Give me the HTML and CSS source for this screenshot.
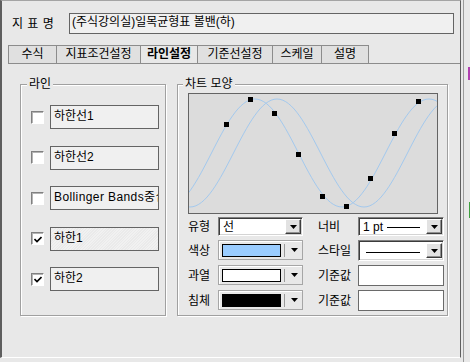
FILE: index.html
```html
<!DOCTYPE html>
<html lang="ko">
<head>
<meta charset="utf-8">
<title>지표 라인설정</title>
<link rel="stylesheet" href="styles.css">
</head>
<body>
<div class="screen">
  <div class="dialog">
    <div class="header">
      <span class="header-label">지 표 명</span>
      <div class="name-box">(주식강의실)일목균형표 볼밴(하)</div>
    </div>
    <div class="tabs">
      <div class="tab t1">수식</div>
      <div class="tab t2">지표조건설정</div>
      <div class="tab t3 active">라인설정</div>
      <div class="tab t4">기준선설정</div>
      <div class="tab t5">스케일</div>
      <div class="tab t6">설명</div>
    </div>
    <div class="panel">
      <div class="group line-group">
        <div class="group-title">라인</div>
        <div class="line-list">
          <div class="line-row"><span class="check"></span><div class="line-name">하한선1</div></div>
          <div class="line-row"><span class="check"></span><div class="line-name">하한선2</div></div>
          <div class="line-row"><span class="check"></span><div class="line-name latin">Bollinger Bands중심선</div></div>
          <div class="line-row"><span class="check checked"><svg width="8" height="7" viewBox="0 0 8 7"><path d="M0.5 3 L3 5.5 L7.5 1" fill="none" stroke="#000" stroke-width="1.6"/></svg></span><div class="line-name hatched">하한1</div></div>
          <div class="line-row"><span class="check checked"><svg width="8" height="7" viewBox="0 0 8 7"><path d="M0.5 3 L3 5.5 L7.5 1" fill="none" stroke="#000" stroke-width="1.6"/></svg></span><div class="line-name">하한2</div></div>
        </div>
      </div>
      <div class="group chart-group">
        <div class="group-title">차트 모양</div>
        <div class="chart">
          <svg width="248" height="119" viewBox="189 94 248 119">
            <path class="curve" d="M168,207 C199.7,207 223.3,99 255,99 C286.7,99 310.3,207 342,207 C373.7,207 397.3,99 429,99 C460.7,99 484.3,207 516,207"/>
            <path class="curve" d="M103,99 C134.7,99 158.3,207 190,207 C221.7,207 245.3,99 277,99 C308.7,99 332.3,207 364,207 C395.7,207 419.3,99 451,99"/>
            <g class="marks">
              <rect x="224" y="122" width="5" height="5"/>
              <rect x="248" y="97" width="5" height="5"/>
              <rect x="272" y="111" width="5" height="5"/>
              <rect x="296" y="152" width="5" height="5"/>
              <rect x="320" y="194" width="5" height="5"/>
              <rect x="344" y="204" width="5" height="5"/>
              <rect x="368" y="176" width="5" height="5"/>
              <rect x="392" y="131" width="5" height="5"/>
              <rect x="416" y="99" width="5" height="5"/>
            </g>
          </svg>
        </div>
        <div class="props">
          <span class="lbl">유형</span>
          <div class="select"><span class="val">선</span><span class="btn"><svg width="7" height="4" viewBox="0 0 7 4"><path d="M0 0H7L3.5 4Z"/></svg></span></div>
          <span class="lbl lbl2">너비</span>
          <div class="select"><span class="val">1 pt</span><span class="pt-line"></span><span class="btn"><svg width="7" height="4" viewBox="0 0 7 4"><path d="M0 0H7L3.5 4Z"/></svg></span></div>

          <span class="lbl">색상</span>
          <div class="combo"><span class="swatch sw-blue"></span><span class="sep"></span><span class="arrow"><svg width="7" height="4" viewBox="0 0 7 4"><path d="M0 0H7L3.5 4Z"/></svg></span></div>
          <span class="lbl lbl2">스타일</span>
          <div class="select tall"><span class="style-line"></span><span class="btn"><svg width="7" height="4" viewBox="0 0 7 4"><path d="M0 0H7L3.5 4Z"/></svg></span></div>

          <span class="lbl">과열</span>
          <div class="combo"><span class="swatch sw-white"></span><span class="sep"></span><span class="arrow"><svg width="7" height="4" viewBox="0 0 7 4"><path d="M0 0H7L3.5 4Z"/></svg></span></div>
          <span class="lbl lbl2">기준값</span>
          <div class="input"></div>

          <span class="lbl">침체</span>
          <div class="combo"><span class="swatch sw-black"></span><span class="sep"></span><span class="arrow"><svg width="7" height="4" viewBox="0 0 7 4"><path d="M0 0H7L3.5 4Z"/></svg></span></div>
          <span class="lbl lbl2">기준값</span>
          <div class="input"></div>
        </div>
      </div>
    </div>
  </div>
  <div class="side">
    <span class="side-line"></span>
    <div class="side-marks">
      <span class="mark-purple"></span>
      <span class="mark-green"></span>
    </div>
  </div>
</div>
</body>
</html>
```

FILE: styles.css
```css
* { box-sizing: border-box; }

html, body {
  margin: 0;
  padding: 0;
}

body {
  width: 470px;
  height: 362px;
  overflow: hidden;
  background: #e8e8e8;
  color: #000;
  font-family: "Liberation Sans", "Noto Sans CJK KR", sans-serif;
  font-size: 12px;
  line-height: 14px;
}

.screen {
  display: flex;
  height: 362px;
}

.dialog {
  width: 461px;
  height: 358px;
  flex: none;
  display: flex;
  flex-direction: column;
  border-top: 1px solid #a4a4a4;
  border-left: 2px solid #5e5e5e;
  border-right: 1px solid #5e5e5e;
  border-bottom: 1px solid #ffffff;
}

/* header */
.header {
  display: flex;
  align-items: center;
  margin-top: 12px;
  padding-left: 10px;
  height: 21px;
}

.header-label {
  width: 57px;
  word-spacing: 1px;
  padding-top: 1px;
}

.name-box {
  width: 385px;
  height: 21px;
  border: 1px solid #646464;
  background: #f0f0f0;
  padding: 1px 2px 0;
  white-space: nowrap;
}

/* tabs */
.tabs {
  display: flex;
  margin-top: 11px;
  margin-left: 6px;
  height: 19px;
  border-bottom: 1px solid #8c8c8c;
}

.tab {
  height: 18px;
  border-top: 1px solid #8c8c8c;
  border-left: 1px solid #8c8c8c;
  background: #e0e0e0;
  text-align: center;
  padding-top: 1px;
  white-space: nowrap;
}

.tab.active {
  background: #e8e8e8;
  font-weight: bold;
}

.t1 { width: 48px; }
.t2 { width: 84px; }
.t3 { width: 57px; }
.t4 { width: 75px; }
.t5 { width: 49px; }
.t6 { width: 48px; border-right: 1px solid #8c8c8c; }

/* panel */
.panel {
  display: flex;
  gap: 11px;
  margin-top: 20px;
  padding-left: 18px;
}

.group {
  height: 232px;
  border: 1px solid #a0a0a0;
  box-shadow: inset 1px 1px #ffffff, 1px 1px #ffffff;
  display: flex;
  flex-direction: column;
  align-items: flex-start;
}

.group-title {
  margin-top: -8px;
  padding: 0 2px;
  background: #e8e8e8;
  line-height: 14px;
  white-space: nowrap;
}

.line-group { width: 146px; }
.line-group .group-title { margin-left: 6px; }

.chart-group { width: 271px; }
.chart-group .group-title { margin-left: 5px; }

/* line list */
.line-list {
  display: flex;
  flex-direction: column;
  gap: 16.5px;
  padding-top: 14px;
  padding-left: 10px;
}

.line-row {
  display: flex;
  align-items: center;
  gap: 6px;
}

.check {
  width: 13px;
  height: 13px;
  background: #ffffff;
  border: 1px solid;
  border-color: #808080 #ffffff #ffffff #808080;
  box-shadow: inset 1px 1px #b4b4b4;
  display: flex;
  align-items: center;
  justify-content: center;
}

.check svg { display: block; margin-top: 1px; }

.line-name {
  width: 109px;
  height: 24px;
  border: 1px solid #646464;
  background: #f0f0f0;
  padding: 3px 3px 0;
  white-space: nowrap;
  overflow: hidden;
  text-overflow: clip;
}

.line-name.latin {
  letter-spacing: 0.4px;
}

.line-name.hatched {
  background:
    repeating-linear-gradient(135deg, #f1f1f1 0 1px, #eaeaea 1px 2px);
}

/* chart */
.chart {
  margin-top: 2px;
  margin-left: 10px;
  width: 250px;
  height: 121px;
  border: 1px solid #646464;
  background: #dcdcdc;
}

.chart svg { display: block; }

.curve {
  fill: none;
  stroke: #a3c9ee;
  stroke-width: 1;
}

.marks rect { fill: #000; }

/* properties */
.props {
  display: grid;
  grid-template-columns: 30px 85px 55px 86px;
  grid-template-rows: 19px 21px 21px 21px;
  row-gap: 4px;
  margin-top: 3px;
  margin-left: 10px;
  align-items: center;
}

.lbl {
  white-space: nowrap;
}

.lbl2 { padding-left: 15px; }

.select {
  height: 19px;
  display: flex;
  align-items: center;
  background: #ffffff;
  border: 1px solid;
  border-color: #808080 #ffffff #ffffff #808080;
  box-shadow: inset 1px 1px #3c3c3c, inset -1px -1px #d4d4d4;
  padding: 0 1px 0 4px;
}

.select.tall { height: 21px; }

.select .val {
  white-space: nowrap;
}

.btn {
  margin-left: auto;
  width: 16px;
  height: 15px;
  background: #e2e2e2;
  border: 1px solid;
  border-color: #ffffff #3c3c3c #3c3c3c #ffffff;
  box-shadow: inset -1px -1px #909090;
  display: flex;
  align-items: center;
  justify-content: center;
}

.btn svg, .arrow svg { display: block; }

.pt-line {
  width: 33px;
  height: 1px;
  background: #000;
  margin-left: 4px;
  margin-top: 2px;
}

.style-line {
  width: 54px;
  height: 1px;
  background: #000;
  margin-left: 3px;
  margin-top: 3px;
}

.combo {
  align-self: start;
  height: 20px;
  display: flex;
  align-items: center;
  border: 1px solid #a6a6a6;
  box-shadow: inset 1px 1px #ffffff;
  padding-left: 3px;
}

.swatch {
  width: 59px;
  height: 13px;
  border: 1px solid #000;
}

.sw-blue { background: #99ccff; }
.sw-white { background: #ffffff; }
.sw-black { background: #000000; }

.sep {
  width: 1px;
  height: 13px;
  background: #9a9a9a;
  margin-left: 3px;
}

.arrow {
  margin-left: 6px;
}

.input {
  height: 21px;
  background: #ffffff;
  border: 1px solid #6a6a6a;
}

/* right edge of the next window */
.side {
  flex: 1;
  display: flex;
}

.side-line {
  width: 1px;
  margin-left: 2px;
  background: #9c9c9c;
}

.side-marks {
  margin-left: 4px;
  display: flex;
  flex-direction: column;
}

.mark-purple {
  width: 2px;
  height: 13px;
  margin-top: 67px;
  background: #b040b0;
}

.mark-green {
  width: 1px;
  height: 16px;
  margin-top: 122px;
  margin-left: 1px;
  background: #40a040;
}
```
